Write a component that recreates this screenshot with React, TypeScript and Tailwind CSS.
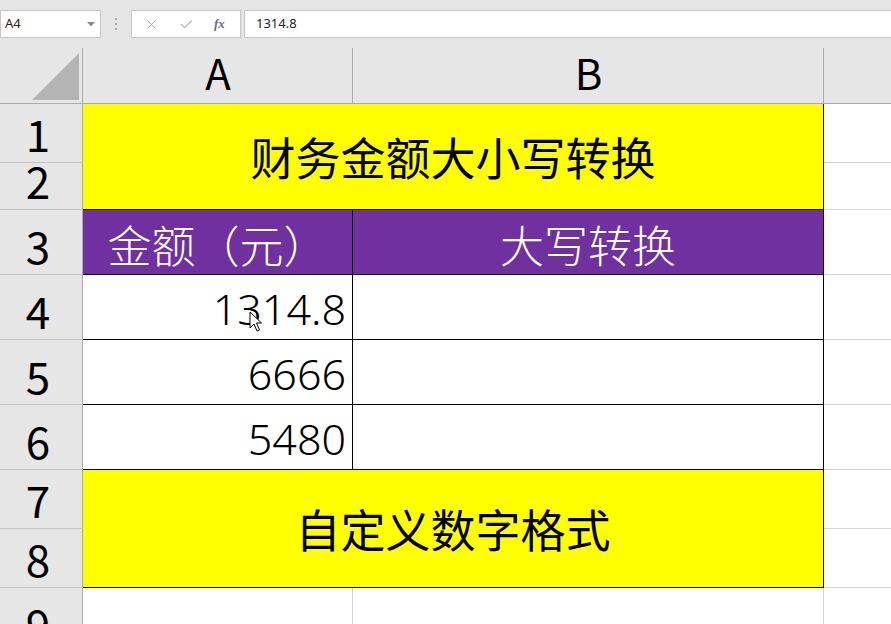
import { X, Check } from "lucide-react";

const cjk = "font-['Noto_Sans_CJK_SC',sans-serif]";
const num = "font-['Noto_Sans','Noto_Sans_CJK_SC',sans-serif]";

function RowHead({ n, row }: { n: number; row: string }) {
    return (
        <div
            className={`col-start-1 ${row} flex items-end justify-center bg-[#e6e6e6] border-r border-b border-r-[#ababab] border-b-[#c4c4c4] text-[44px] leading-none pb-[7px] pr-[6px] text-black ${cjk}`}
        >
            {n}
        </div>
    );
}

export default function App() {
    return (
        <div className="relative w-[891px] h-[624px] overflow-hidden bg-white">
            {/* formula bar */}
            <div className="h-[38px] bg-[#e6e6e6] flex items-start pt-[10px] font-['Noto_Sans',sans-serif]">
                <div className="w-[101px] h-[28px] bg-white border border-[#c6c6c6] flex items-center pl-[4px] pr-[5px] text-[13px] text-[#222]">
                    <span className="flex-1">A4</span>
                    <svg width="8" height="5" viewBox="0 0 8 5">
                        <polygon points="0,0 8,0 4,4.5" fill="#8a8a8a" />
                    </svg>
                </div>
                <div className="w-[30px] h-[28px] flex flex-col items-center justify-center gap-[3px]">
                    <span className="w-[2px] h-[2px] bg-[#a6a6a6]" />
                    <span className="w-[2px] h-[2px] bg-[#a6a6a6]" />
                    <span className="w-[2px] h-[2px] bg-[#a6a6a6]" />
                </div>
                <div className="w-[110px] h-[28px] bg-white border border-[#c6c6c6] flex items-center pl-[12px] gap-[20px]">
                    <X size={15} strokeWidth={1.6} color="#b3b3b3" />
                    <Check size={15} strokeWidth={1.8} color="#b3b3b3" />
                    <span className="italic text-[13px] text-[#6f6a80] font-['Liberation_Serif',serif] font-bold">fx</span>
                </div>
                <div className="ml-[3px] flex-1 h-[28px] bg-white border border-r-0 border-[#c6c6c6] flex items-center pl-[11px] text-[13px] text-[#222]">
                    1314.8
                </div>
            </div>

            {/* sheet */}
            <div className="grid grid-cols-[83px_270px_471px_1fr] grid-rows-[66px_59px_47px_65px_65px_65px_65px_59px_59px_65px]">
                {/* corner */}
                <div className="col-start-1 row-start-1 relative bg-[#e6e6e6] border-b border-b-[#ababab]">
                    <span className="absolute right-0 top-[10px] bottom-0 w-px bg-[#ababab]" />
                    <svg className="absolute left-[32px] top-[15px]" width="47" height="47" viewBox="0 0 47 47">
                        <polygon points="47,0 47,47 0,47" fill="#b4b4b4" />
                    </svg>
                </div>
                {/* column headers */}
                <div className={`col-start-2 row-start-1 relative flex items-end justify-center bg-[#e6e6e6] border-b border-b-[#ababab] text-[42px] leading-none pb-[10px] ${cjk}`}>
                    <span className="absolute right-0 top-[10px] bottom-0 w-px bg-[#ababab]" />
                    A
                </div>
                <div className={`col-start-3 row-start-1 relative flex items-end justify-center bg-[#e6e6e6] border-b border-b-[#ababab] text-[42px] leading-none pb-[10px] ${cjk}`}>
                    <span className="absolute right-0 top-[10px] bottom-0 w-px bg-[#ababab]" />
                    B
                </div>
                <div className="col-start-4 row-start-1 bg-[#e6e6e6] border-b border-b-[#ababab]" />

                {/* row headers */}
                <RowHead n={1} row="row-start-2" />
                <RowHead n={2} row="row-start-3" />
                <RowHead n={3} row="row-start-4" />
                <RowHead n={4} row="row-start-5" />
                <RowHead n={5} row="row-start-6" />
                <RowHead n={6} row="row-start-7" />
                <RowHead n={7} row="row-start-8" />
                <RowHead n={8} row="row-start-9" />
                <RowHead n={9} row="row-start-10" />

                {/* title */}
                <div className={`col-start-2 col-span-2 row-start-2 row-span-2 flex items-center justify-center bg-[#ffff00] border-r border-b border-black text-[45px] text-black ${cjk}`}>
                    财务金额大小写转换
                </div>

                {/* header row */}
                <div className={`col-start-2 row-start-4 flex items-center justify-center bg-[#7030a0] border-r border-b border-black text-[44px] font-light text-white pt-[4px] ${cjk}`}>
                    金额（元）
                </div>
                <div className={`col-start-3 row-start-4 flex items-center justify-center bg-[#7030a0] border-r border-b border-black text-[44px] font-light text-white pt-[4px] ${cjk}`}>
                    大写转换
                </div>

                {/* values */}
                {[
                    ["row-start-5", "1314.8"],
                    ["row-start-6", "6666"],
                    ["row-start-7", "5480"],
                ].map(([row, v]) => (
                    <div key={v} className="contents">
                        <div className={`col-start-2 ${row} flex items-end justify-end border-r border-b border-black text-[43px] font-light leading-none pr-[6px] pb-[9px] text-black ${num}`}>
                            {v}
                        </div>
                        <div className={`col-start-3 ${row} border-r border-b border-black`} />
                    </div>
                ))}

                {/* footer */}
                <div className={`col-start-2 col-span-2 row-start-8 row-span-2 flex items-center justify-center bg-[#ffff00] border-r border-b border-black text-[45px] text-black ${cjk}`}>
                    自定义数字格式
                </div>

                {/* row 9 */}
                <div className="col-start-2 row-start-10 border-r border-b border-[#d4d4d4]" />
                <div className="col-start-3 row-start-10 border-r border-b border-[#d4d4d4]" />

                {/* column C */}
                <div className="col-start-4 row-start-2 border-b border-[#d4d4d4]" />
                <div className="col-start-4 row-start-3 border-b border-[#d4d4d4]" />
                <div className="col-start-4 row-start-4 border-b border-[#d4d4d4]" />
                <div className="col-start-4 row-start-5 border-b border-[#d4d4d4]" />
                <div className="col-start-4 row-start-6 border-b border-[#d4d4d4]" />
                <div className="col-start-4 row-start-7 border-b border-[#d4d4d4]" />
                <div className="col-start-4 row-start-8 border-b border-[#d4d4d4]" />
                <div className="col-start-4 row-start-9 border-b border-[#d4d4d4]" />
                <div className="col-start-4 row-start-10 border-b border-[#d4d4d4]" />
            </div>

            {/* mouse pointer */}
            <svg className="absolute left-[249px] top-[311px]" width="14" height="22" viewBox="0 0 14 22">
                <path d="M1 1 L1 17 L5 13 L8 20 L10.5 19 L7.5 12 L12.5 12 Z" fill="#fff" stroke="#000" strokeWidth="1" strokeLinejoin="round" />
            </svg>
        </div>
    );
}
